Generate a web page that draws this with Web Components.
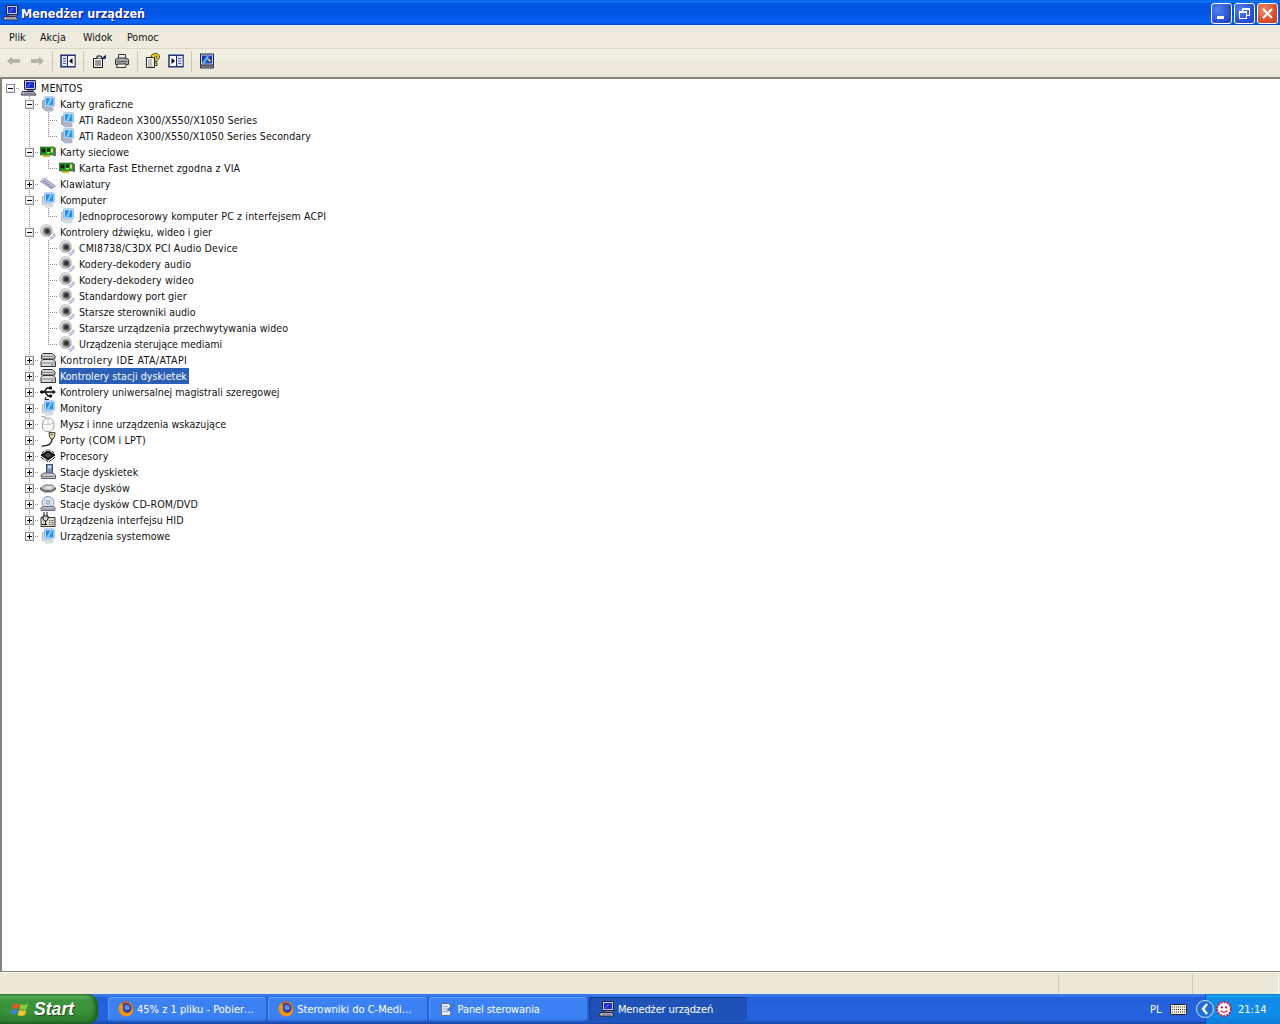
<!DOCTYPE html>
<html lang="pl"><head><meta charset="utf-8"><title>Menedżer urządzeń</title>
<style>
html,body{margin:0;padding:0;background:#ece9d8}
body{font-family:"DejaVu Sans","Liberation Sans",sans-serif;font-stretch:condensed;font-size:10.6px;color:#111}
</style></head><body>
<xp-app>
  <xp-title>Menedżer urządzeń</xp-title>
  <xp-menu><span>Plik</span><span>Akcja</span><span>Widok</span><span>Pomoc</span></xp-menu>
  <xp-toolbar></xp-toolbar>
  <device-tree>
    <tree-row c="r" x="-" d="1" icon="computer">MENTOS</tree-row>
    <tree-row c="e t" x="-" d="1" icon="display">Karty graficzne</tree-row>
    <tree-row c="e v t" d="3" icon="display">ATI Radeon X300/X550/X1050 Series</tree-row>
    <tree-row c="e v l" d="3" icon="display">ATI Radeon X300/X550/X1050 Series Secondary</tree-row>
    <tree-row c="e t" x="-" icon="net">Karty sieciowe</tree-row>
    <tree-row c="e v l" d="5" icon="net">Karta Fast Ethernet zgodna z VIA</tree-row>
    <tree-row c="e t" x="+" icon="keyboard">Klawiatury</tree-row>
    <tree-row c="e t" x="-" icon="system">Komputer</tree-row>
    <tree-row c="e v l" d="6" icon="system">Jednoprocesorowy komputer PC z interfejsem ACPI</tree-row>
    <tree-row c="e t" x="-" icon="speaker">Kontrolery dźwięku, wideo i gier</tree-row>
    <tree-row c="e v t" d="3" icon="speaker">CMI8738/C3DX PCI Audio Device</tree-row>
    <tree-row c="e v t" d="2" icon="speaker">Kodery-dekodery audio</tree-row>
    <tree-row c="e v t" d="3" icon="speaker">Kodery-dekodery wideo</tree-row>
    <tree-row c="e v t" d="1" icon="speaker">Standardowy port gier</tree-row>
    <tree-row c="e v t" icon="speaker">Starsze sterowniki audio</tree-row>
    <tree-row c="e v t" d="1" icon="speaker">Starsze urządzenia przechwytywania wideo</tree-row>
    <tree-row c="e v l" d="-2" icon="speaker">Urządzenia sterujące mediami</tree-row>
    <tree-row c="e t" x="+" d="10" icon="ide">Kontrolery IDE ATA/ATAPI</tree-row>
    <tree-row c="e t" x="+" d="1" icon="ide" selected>Kontrolery stacji dyskietek</tree-row>
    <tree-row c="e t" x="+" icon="usb">Kontrolery uniwersalnej magistrali szeregowej</tree-row>
    <tree-row c="e t" x="+" icon="system">Monitory</tree-row>
    <tree-row c="e t" x="+" icon="mouse">Mysz i inne urządzenia wskazujące</tree-row>
    <tree-row c="e t" x="+" d="3" icon="port">Porty (COM i LPT)</tree-row>
    <tree-row c="e t" x="+" d="2" icon="cpu">Procesory</tree-row>
    <tree-row c="e t" x="+" icon="floppy">Stacje dyskietek</tree-row>
    <tree-row c="e t" x="+" d="2" icon="disk">Stacje dysków</tree-row>
    <tree-row c="e t" x="+" d="3" icon="cd">Stacje dysków CD-ROM/DVD</tree-row>
    <tree-row c="e t" x="+" d="2" icon="hid">Urządzenia interfejsu HID</tree-row>
    <tree-row c="e l" x="+" icon="system">Urządzenia systemowe</tree-row>
  </device-tree>
  <xp-status></xp-status>
  <xp-taskbar>
    <task-btn icon="firefox">45% z 1 pliku - Pobier…</task-btn>
    <task-btn icon="firefox">Sterowniki do C-Medi…</task-btn>
    <task-btn icon="panel" tight>Panel sterowania</task-btn>
    <task-btn icon="computer" active tight>Menedżer urządzeń</task-btn>
  </xp-taskbar>
</xp-app>
<script>
const ICONS={
computer:`<rect x="3.5" y=".5" width="11" height="9" rx=".5" fill="#c6c9e2" stroke="#1f1f3d"/><rect x="5" y="2" width="8" height="6" fill="#1a2cc8"/><path d="M5.500 7l3-4h2l-3 4z" fill="#4a63e8"/><path d="M6 10h7v1H6z" fill="#7d7d98"/><path d="M1.500 11.500h11l2.500 3.500H.5z" fill="#e6e6ee" stroke="#26263f"/><path d="M3 13h9.500M2.500 14h10" stroke="#6e6e82"/>`,
display:`<path d="M2.500 4.500h3v8h-3z" fill="#a8b3c2" stroke="#8692a3" stroke-width=".7"/><path d="M4.500 11h7.500l2 2.500-2 2H6l-2.500-2z" fill="#aeb6c2"/><rect x="4.500" y=".8" width="10" height="10" rx="1" fill="#d6e2f0" stroke="#93a9c6" stroke-width=".8"/><rect x="5.800" y="2.200" width="7.500" height="7.200" fill="#2a93ea"/><path d="M6.500 9.400 10 2.200h2.500L9 9.400z" fill="#7fd0fb"/>`,
system:`<path d="M2.500 4.500h3v8h-3z" fill="#d9dde4" stroke="#9aa4b2" stroke-width=".7"/><path d="M4.500 11h7.500l2 2.500-2 2H6l-2.500-2z" fill="#d4d9e0"/><rect x="4.500" y=".8" width="10" height="10" rx="1" fill="#dcebfa" stroke="#83aedb" stroke-width=".8"/><rect x="5.800" y="2.200" width="7.500" height="7.200" fill="#2589f2"/><path d="M6.500 9.400 10 2.200h2.500L9 9.400z" fill="#79c9fc"/>`,
net:`<rect x=".3" y="3" width="14" height="8" fill="#2f9a2c" stroke="#1a5d18" stroke-width=".6"/><rect x="1.500" y="4.500" width="4" height="4" fill="#11230f"/><rect x="7" y="4.500" width="3" height="3" fill="#11230f"/><rect x="11" y="4.500" width="2" height="4" fill="#cfe06f"/><path d="M3 11h7v2H3z" fill="#cdb531"/><rect x="7" y="8" width="3" height="1.500" fill="#9be84a"/><rect x="14" y="4" width="2" height="8" fill="#696969"/>`,
keyboard:`<path d="M.5 5.500 6 3.500 15.500 10l-4 2.500z" fill="#c8c7e4" stroke="#9392b8"/><path d="M3 6l3-1M5 7.500l3-1M7 9l3-1M9 10.500l3-1M11 12l2.500-1" stroke="#7a79a2"/><path d="M1 4C3 1.500 5 4 7 1.500" fill="none" stroke="#a7a7b8"/>`,
speaker:`<path d="M9.500 14a7 7 0 0 0 5-4.500M10.500 15.700a9 9 0 0 0 5.200-5.200" fill="none" stroke="#8f8bd0"/><circle cx="6.500" cy="6.500" r="6.300" fill="#b9b9b9"/><circle cx="6" cy="6" r="5" fill="#d8d8d8"/><circle cx="7" cy="7" r="3.800" fill="#777"/><circle cx="7.300" cy="7.300" r="2.200" fill="#2c2c2c"/><path d="M8.500 11.500a5.500 5.500 0 0 0 3-3" stroke="#666" fill="none"/>`,
ide:`<path d="M3 1.500h9.500l2.500 2.500v3H1.500V3z" fill="#cfcfcf" stroke="#3a3a3a"/><path d="M2 4.500h12.500" stroke="#888"/><path d="M3 7.500h10l2.500 2.500v4.500H1V9.500z" fill="#dcdcdc" stroke="#333"/><path d="M1.500 11h13.500" stroke="#888"/><rect x="11" y="12.200" width="2.500" height="1" fill="#37a"/>`,
usb:`<path d="M0 8h13" stroke="#111" stroke-width="1.600"/><path d="M16 8l-3.500-2.200v4.400z" fill="#111"/><circle cx="2" cy="8" r="1.800" fill="#111"/><path d="M4 8l3-4h3M5 8l3 4h2" stroke="#111" stroke-width="1.400" fill="none"/><rect x="9" y="2.500" width="3" height="3" fill="#111"/><circle cx="10.500" cy="12" r="1.700" fill="#111"/><path d="M6 13l-1 2.500h4" stroke="#111" fill="none"/>`,
mouse:`<path d="M8 15.500c4 0 6-2 6-6C14 5 11.500 1.500 8 2 4.500 2.500 2.500 5 2.500 9.500c0 4 1.500 6 5.500 6z" fill="#fbfbf9" stroke="#9a9a9a"/><path d="M3 8c2 1 6 1 10.500-1M8 2v6" stroke="#c5c5c5" fill="none"/><path d="M6 2C5 0 3 1 1 0" stroke="#888" fill="none"/>`,
port:`<path d="M9 .5h6l-.5 4.500-1.500 2H11L9.500 5z" fill="#dcdc9a" stroke="#444"/><path d="M12 7c0 5-3 7-10 7" fill="none" stroke="#222" stroke-width="1.400"/><path d="M10 2.500h3" stroke="#777"/><path d="M1 14.500h3" stroke="#999" stroke-width="1.500"/>`,
cpu:`<path d="M1 7 8 3l7 4-7 5z" fill="#1a1a1a" stroke="#000"/><path d="M4 7l4-2 4 2-4 3z" fill="#4f4f4f"/><path d="M1 9l2 2M3 10.500l2 2M6 12l2 2M11 12l-2 2M13 10.500l-2 2M15 9l-2 2M2 5l2-2M5 3.500l2-2M11 3.500l-2-2M14 5l-2-2" stroke="#222"/>`,
floppy:`<rect x="6.500" y=".5" width="6" height="10" fill="#7d8fb3" stroke="#3c4a6f"/><rect x="8" y="1.500" width="3" height="3" fill="#d6dced"/><path d="M1 11l3-2h9l2.500 2v3.500h-14z" fill="#c8c8c8" stroke="#55597a"/><path d="M2 12.500h12" stroke="#777"/>`,
disk:`<path d="M.5 8 5 5h7l3.500 3-4 2.500h-7z" fill="#c7c7c7" stroke="#777"/><path d="M.5 8v1.500l4 2.500h7l4-2.500V8l-4 2.500h-7z" fill="#8b8b8b" stroke="#666"/><ellipse cx="9" cy="7.500" rx="3" ry="1.300" fill="#e6e6e6"/>`,
cd:`<circle cx="8" cy="6.500" r="6" fill="#dbe3f1" stroke="#8b95ab"/><circle cx="8" cy="6.500" r="1.600" fill="#fff" stroke="#778"/><path d="M4 3.500l3 2M10 9l2 1" stroke="#a8c2f2"/><path d="M1 11.500l3-1h8l3 1v3H1z" fill="#c8c8cc" stroke="#6b6b78"/><path d="M2 13h12" stroke="#888"/>`,
hid:`<path d="M1 5.500h14v9H1z" fill="#e6e2cf" stroke="#333"/><path d="M9 8.500h5M9 10.500h5M9 12.500h5" stroke="#555" stroke-dasharray="1 .5"/><path d="M4 0v4M7 0v4M3 4h5v3l-1.500 2h-2L3 7zM5.500 9v4" stroke="#111" fill="#d7d7d7"/><path d="M2 12.500h5" stroke="#111"/>`,
firefox:`<circle cx="8" cy="8" r="7.500" fill="#e8781a"/><circle cx="8.500" cy="7" r="5" fill="#2b3f9e"/><circle cx="9" cy="6.500" r="2.800" fill="#5f88d8"/><path d="M1 5c-.5 5 2.500 10 7.500 10 4 0 7-3.500 7-7-1 3-4 4.500-6.500 4-3-.5-5-3-4-6.500L4 3C2.500 3 1.500 4 1 5z" fill="#f09a1c"/><path d="M4 1.500C6 0 10 0 12 1.500 10 1 7 1.500 5.500 3z" fill="#d9491a"/>`,
panel:`<path d="M2.500 2.500h7l2 2v10h-9z" fill="#e8ecf5" stroke="#5b6f9a"/><path d="M4 5.500h5M4 8h5M4 10.500h4" stroke="#8ca0c8"/><path d="M9 8l5-5 1.500 1.500-5 5-2 .5z" fill="#4f86dd" stroke="#244e99" stroke-width=".6"/>`
};
function svg(n,s=16){return `<svg xmlns="http://www.w3.org/2000/svg" width="${s}" height="${s}" viewBox="0 0 16 16" style="display:block;flex:none">${ICONS[n]||''}</svg>`}
function def(name,css,html){
  customElements.define(name,class extends HTMLElement{
    constructor(){super();const r=this.attachShadow({mode:'open'});r.innerHTML=`<style>${css}</style>`+(typeof html==='function'?html(this):html)}
  })
}
def('xp-app',`:host{display:flex;flex-direction:column;width:1280px;height:1024px;overflow:hidden;background:#ece9d8}`,`<slot></slot>`);

def('xp-title',`:host{display:flex;align-items:center;flex:none;height:25px;box-sizing:border-box;padding:1px 2px 0 3px;background:linear-gradient(180deg,#0a5ae0 0,#0a7bf0 6%,#0458e4 14%,#0253e2 50%,#0461f2 85%,#0560f0 92%,#0241c8 100%);color:#fff}
.t{font:700 12.500px "DejaVu Sans","Liberation Sans",sans-serif;font-stretch:condensed;margin-left:2px;white-space:nowrap;text-shadow:1px 1px 0 #0f1089;flex:1}
.b{width:21px;height:21px;box-sizing:border-box;border:1px solid #fff;border-radius:3px;margin-left:2px;background:radial-gradient(circle at 30% 30%,#4f83ea,#2a50cf 65%,#2140c0);display:grid;place-items:center;flex:none}
.c{background:radial-gradient(circle at 30% 30%,#ec8d6c,#d8512f 60%,#b83a1c)}
svg{display:block}`,
()=>`${svg('computer')}<span class="t"><slot></slot></span>
<span class="b"><svg width="13" height="13" viewBox="0 0 13 13"><rect x="2" y="9" width="7" height="3" fill="#fff"/></svg></span>
<span class="b"><svg width="13" height="13" viewBox="0 0 13 13" fill="none" stroke="#fff"><rect x="1.500" y="4.500" width="7" height="7"/><path d="M1.500 5.500h7"/><path d="M4.500 4V1.500h7v7H9"/><path d="M4.500 2.500h7"/></svg></span>
<span class="b c"><svg width="13" height="13" viewBox="0 0 13 13" stroke="#fff" stroke-width="2"><path d="M2 2l9 9M11 2l-9 9"/></svg></span>`);

def('xp-menu',`:host{display:flex;align-items:center;flex:none;height:24px;box-sizing:border-box;padding-left:2px;background:#eeebdd;border-bottom:1px solid #dcd8c6}
::slotted(span){padding:0 7px;box-sizing:border-box}
::slotted(:nth-child(1)){width:31px}
::slotted(:nth-child(2)){width:43px}
::slotted(:nth-child(3)){width:44px}`,`<slot></slot>`);

const TB={
back:`<path d="M1 8l5-4.500V6h8v4H6v2.500z" fill="#b4b3a4"/>`,
fwd:`<path d="M15 8l-5-4.500V6H2v4h8v2.500z" fill="#b4b3a4"/>`,
tree:`<rect x="1" y="2.200" width="14" height="11.600" fill="#dfe5f4" stroke="#16236a" stroke-width="1.400"/><rect x="8" y="3" width="6.500" height="10" fill="#fff"/><path d="M7.500 2.500v11" stroke="#16236a"/><path d="M3 5.500h3M3 8h3M3 10.500h3" stroke="#4a5ea8"/><path d="M12.500 5v6L9 8z" fill="#000"/>`,
props:`<path d="M2.500 5.500h9v9h-9z" fill="#fff" stroke="#111"/><path d="M4 8h6M4 10h6M4 12h6" stroke="#333"/><path d="M6 5.500V3h4l1 2.500" fill="#ddd" stroke="#111"/><path d="M12 4.500l3-3v4l-2.500 1z" fill="#1d2f8f"/><path d="M10 6l4-3" stroke="#223"/>`,
print:`<path d="M4.500 1.500h7v4h-7z" fill="#eee" stroke="#333"/><path d="M1.500 6.500 4 5h8l2.500 1.500v5h-13z" fill="#aaa" stroke="#333"/><path d="M3 8.500h10" stroke="#555"/><path d="M3.500 11h9l-1 3.500h-9z" fill="#f5f5f5" stroke="#333"/>`,
help:`<path d="M1.500 4.500h8v10h-8z" fill="#fff" stroke="#222"/><path d="M3 7h4M3 9h4M3 11h4M3 13h5" stroke="#888"/><path d="M6 4c0-3 3-3.500 5-3.500s3.500 1.500 3.500 3.500-2.500 2.500-2.500 4.500H9.500c0-3 2.500-3 2.500-4.500S9.500 3 9 5z" fill="#f7d21c" stroke="#222" stroke-width=".8"/><rect x="9.500" y="10" width="2.500" height="2.500" fill="#f7d21c" stroke="#222" stroke-width=".8"/>`,
panel2:`<rect x="1" y="2.200" width="14" height="11.600" fill="#fff" stroke="#16236a" stroke-width="1.400"/><rect x="9" y="3" width="5.500" height="10" fill="#dfe5f4"/><path d="M8.500 2.500v11" stroke="#16236a"/><path d="M10 5.500h3M10 8h3M10 10.500h3" stroke="#4a5ea8"/><path d="M3.500 5v6L7 8z" fill="#000"/>`,
scan:`<rect x="1.500" y="1" width="13" height="11" fill="#cfd5e4" stroke="#223"/><rect x="3" y="2.500" width="10" height="8" fill="#1d3bc0"/><path d="M3 10l5-7 2 0-4 7z" fill="#48c0d8"/><path d="M9 5l3 3-1 1-3-3z" fill="#ffe34a"/><path d="M1.500 13h13v2h-13z" fill="#b9c4a8" stroke="#224"/>`
};
function tb(n){return `<span class="b"><svg width="16" height="16" viewBox="0 0 16 16">${TB[n]}</svg></span>`}
def('xp-toolbar',`:host{display:flex;align-items:center;flex:none;height:28px;box-sizing:border-box;padding:0 0 4px 2px;background:linear-gradient(180deg,#f2efe4,#ebe8d9)}
.b{width:23px;height:22px;display:grid;place-items:center;flex:none}
.s{width:8px;height:21px;display:block;flex:none;background:linear-gradient(#c9c6b5,#c9c6b5) center/1px 100% no-repeat}`,
`${tb('back')}${tb('fwd')}<i class="s"></i>${tb('tree')}<i class="s"></i>${tb('props')}${tb('print')}<i class="s"></i>${tb('help')}${tb('panel2')}<i class="s"></i>${tb('scan')}`);

def('device-tree',`:host{display:block;flex:1;min-height:0;box-sizing:border-box;background:#fff;border-top:2px solid #85837a;border-left:2px solid #85837a;border-bottom:1px solid #85837a;padding-top:1px;overflow:hidden}`,`<slot></slot>`);

const DOTV='repeating-linear-gradient(to bottom,#8a8a8a 0 1px,transparent 1px 2px) 9px 0/1px 100% no-repeat';
const DOTVT='repeating-linear-gradient(to bottom,#8a8a8a 0 1px,transparent 1px 2px) 9px 0/1px 8px no-repeat';
const DOTH='repeating-linear-gradient(to right,#8a8a8a 0 1px,transparent 1px 2px) 9px 8px/11px 1px no-repeat';
def('tree-row',`:host{display:flex;align-items:center;height:16px;margin-left:-1px;white-space:nowrap}
.c{display:grid;place-items:center;width:19px;height:16px;flex:none;overflow:visible}
.x{width:9px;height:9px;box-sizing:border-box;border:1px solid #808a9a;background:#fff;box-shadow:inset -1px -1px 0 #e4e2d8}
.i{margin-left:1px;flex:none}
.l{margin-left:3px;padding:0 2px 0 1px;height:16px;line-height:16px;display:block}
:host([selected]) .l{background:#2b5fb5;color:#fff}`,
(el)=>{
  const cells=(el.getAttribute('c')||'').split(' ');
  const x=el.getAttribute('x');
  const d=parseFloat(el.getAttribute('d')||'0');
  const ls=d/Math.max(1,el.textContent.length);
  let h='';
  cells.forEach((k,i)=>{
    const bg={e:'none',v:DOTV,t:DOTV+','+DOTH,l:DOTVT+','+DOTH,r:DOTH}[k];
    let inner='';
    if(i===cells.length-1&&x){inner=`<span class="x"><svg width="7" height="7" viewBox="0 0 7 7" style="display:block"><path d="M1 3.500h5${x==='+'?'M3.500 1v5':''}" stroke="#000"/></svg></span>`}
    h+=`<span class="c" style="background:${bg}">${inner}</span>`;
  });
  return h+`<span class="i">${svg(el.getAttribute('icon'))}</span><span class="l" style="letter-spacing:${ls.toFixed(3)}px"><slot></slot></span>`;
});

def('xp-status',`:host{display:grid;grid-template-columns:1059px 134px 86px 1px;flex:none;height:22px;box-sizing:border-box;background:#ebe8d8;border-top:1px solid #f8f7f0}
span{border-right:1px solid #fbfaf4;box-shadow:-1px 0 0 #cfccba;margin:1px 0 0}
span:last-child{border:0;box-shadow:none}`,`<span></span><span></span><span></span><span></span>`);

def('xp-taskbar',`:host{display:flex;align-items:center;flex:none;height:30px;background:linear-gradient(180deg,#2b6fe0 0,#3a86f2 4%,#245edb 12%,#2563de 50%,#2560db 85%,#1b48a8 100%);overflow:hidden;color:#fff}
.st{width:98px;height:30px;flex:none;display:flex;align-items:center;box-sizing:border-box;padding-left:11px;gap:4px;border-radius:0 10px 10px 0;background:linear-gradient(180deg,#3f8e45 0,#5fb45e 8%,#3d963e 20%,#399139 60%,#2f7d31 90%,#246326 100%);box-shadow:inset -3px 0 4px #1d5a20;color:#fff;font:italic 700 17.600px "Liberation Sans",sans-serif;text-shadow:1px 1px 1px #1a4b1a}
.tasks{display:flex;gap:2px;margin-left:10px;flex:1;min-width:0}
.tray{width:75px;height:30px;flex:none;display:flex;align-items:center;box-sizing:border-box;background:linear-gradient(180deg,#0c6ccb 0,#19a5f0 6%,#108ae8 14%,#0f8ce9 70%,#0d7bd9 100%);box-shadow:inset 1px 0 0 #0a4fa8;gap:5px;font-size:11px}
.left{display:flex;align-items:center;flex:none;width:62px;height:30px;box-sizing:border-box;font-size:11px}
.left b{font-weight:400;width:27px;padding-left:7px;box-sizing:border-box}
.clk{margin-left:1px}
svg{display:block;flex:none}`,
()=>`<div class="st"><svg width="19" height="20" viewBox="0 0 20 20"><path d="M2 5c2-1 4-1 7 0l-1.500 5c-2-1-4-1-7 0z" fill="#e8532a"/><path d="M10 5c3 1 5 1 8-.5L16.500 10c-3 1-5 1-7.500 0z" fill="#8fc83b"/><path d="M.500 11c2-1 4-1 6.500 0l-1.500 5c-2-1-4-1-6.500 0z" fill="#3f7ee8"/><path d="M8.500 11c3 1 5 1 7.500 0l-1.500 5.500c-3 1-5 1-7.500 0z" fill="#f7c72d"/></svg><span>Start</span></div>
<div class="tasks"><slot></slot></div>
<div class="left"><b>PL</b><svg width="17" height="16" viewBox="0 0 17 16"><rect x=".5" y="3.500" width="16" height="10" rx="1" fill="#f4f0dc" stroke="#222"/><path d="M2 6h13M2 8.500h13M2 11h13" stroke="#333" stroke-dasharray="1 1"/></svg></div>
<div class="tray"><svg style="margin-left:-9px" width="18" height="22" viewBox="0 0 18 22"><circle cx="9" cy="11" r="8.500" fill="#1f6fd6" stroke="#cfe5fb"/><path d="M11 6l-4 5 4 5" fill="none" stroke="#fff" stroke-width="2.400"/></svg><svg width="16" height="16" viewBox="0 0 15 15" style="margin-left:-3px"><circle cx="7.500" cy="7.500" r="6.500" fill="#fff" stroke="#b03050" stroke-width="2" stroke-dasharray="2 1"/><circle cx="5.500" cy="6" r="1" fill="#c03"/><circle cx="9.500" cy="6" r="1" fill="#c03"/><path d="M4.500 9c1.500 2 4.500 2 6 0" fill="none" stroke="#c03"/></svg><span class="clk">21:14</span></div>`);

def('task-btn',`:host{display:flex;align-items:center;box-sizing:border-box;width:158.300px;height:24px;border-radius:3px;padding-left:10px;gap:3px;color:#fff;white-space:nowrap;font-size:11px;background:linear-gradient(180deg,#4c90f2 0,#3c81f3 10%,#3c81f3 85%,#2f6fd8 100%);box-shadow:inset 1px 1px 0 #5a9cf5}
:host([tight]){letter-spacing:-.12px}
:host([active]){background:#1e52b7;box-shadow:inset 1px 1px 1px #143c90}`,
(el)=>`${svg(el.getAttribute('icon'))}<slot></slot>`);
</script>
</body></html>
